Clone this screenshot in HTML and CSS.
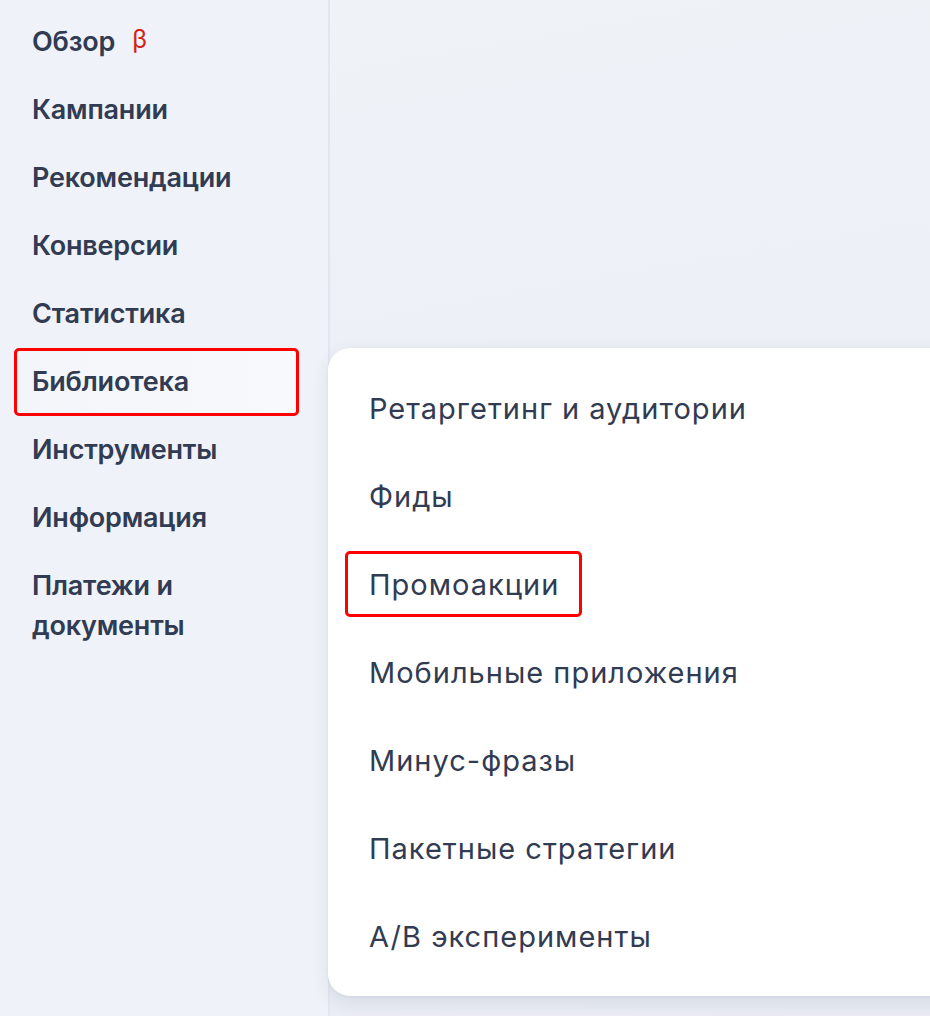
FILE: index.html
```html
<!DOCTYPE html>
<html lang="ru">
<head>
<meta charset="utf-8">
<link rel="stylesheet" href="styles.css">
</head>
<body>
<div class="app">
  <nav class="sidebar">
    <a class="nav-item">Обзор<span class="beta">β</span></a>
    <a class="nav-item">Кампании</a>
    <a class="nav-item">Рекомендации</a>
    <a class="nav-item">Конверсии</a>
    <a class="nav-item">Статистика</a>
    <a class="nav-item nav-item--active">Библиотека</a>
    <a class="nav-item">Инструменты</a>
    <a class="nav-item">Информация</a>
    <a class="nav-item">Платежи и<br>документы</a>
  </nav>
  <main class="content"></main>
  <div class="submenu">
    <a class="sub-item">Ретаргетинг и аудитории</a>
    <a class="sub-item">Фиды</a>
    <a class="sub-item"><span class="sub-mark">Промоакции</span></a>
    <a class="sub-item">Мобильные приложения</a>
    <a class="sub-item">Минус-фразы</a>
    <a class="sub-item">Пакетные стратегии</a>
    <a class="sub-item">A/B эксперименты</a>
  </div>
</div>
</body>
</html>
```

FILE: styles.css
```css
* { box-sizing: border-box; }
html, body { margin: 0; height: 100%; }
body {
  font-family: "Inter", "Open Sans", sans-serif;
  color: #313b52;
  background: #eef1f7;
  overflow: hidden;
}
.app {
  position: relative;
  display: flex;
  height: 1016px;
}
.sidebar {
  width: 330px;
  flex: none;
  padding-top: 8px;
  background: #eff2f8;
  border-right: 2px solid #e2e6ef;
  display: flex;
  flex-direction: column;
}
.nav-item {
  display: block;
  margin-left: 14px;
  width: 285px;
  padding: 14px 0 14px 18px;
  font-size: 27px;
  line-height: 40px;
  font-weight: 600;
  letter-spacing: -0.2px;
  color: #313b52;
}
.nav-item--active {
  border: 3px solid #ff0000;
  border-radius: 5px;
  padding: 11px 0 11px 15px;
  background: linear-gradient(90deg, #f3f5fa, #f8f9fc);
}
.beta {
  color: #d42219;
  font-weight: 400;
  font-size: 25px;
  margin-left: 17px;
  position: relative;
  top: -3px;
}
.content {
  flex: 1;
  background: linear-gradient(170deg, #eff2f7 0%, #ebeef5 60%, #e9ecf3 100%);
}
.submenu {
  position: absolute;
  left: 328px;
  top: 348px;
  width: 640px;
  height: 648px;
  padding: 16px 0;
  background: #ffffff;
  border-radius: 22px 0 0 22px;
  box-shadow: 0 6px 18px rgba(40, 55, 90, 0.10), 0 1px 3px rgba(40, 55, 90, 0.06);
}
.sub-item {
  display: flex;
  align-items: center;
  height: 88px;
  padding-left: 41px;
  font-size: 29px;
  font-weight: 400;
  letter-spacing: 1px;
  color: #313b52;
}
.sub-mark {
  display: flex;
  align-items: center;
  height: 66px;
  margin-left: -24px;
  padding: 0 20px 0 21px;
  border: 3px solid #ff0000;
  border-radius: 5px;
}
```
